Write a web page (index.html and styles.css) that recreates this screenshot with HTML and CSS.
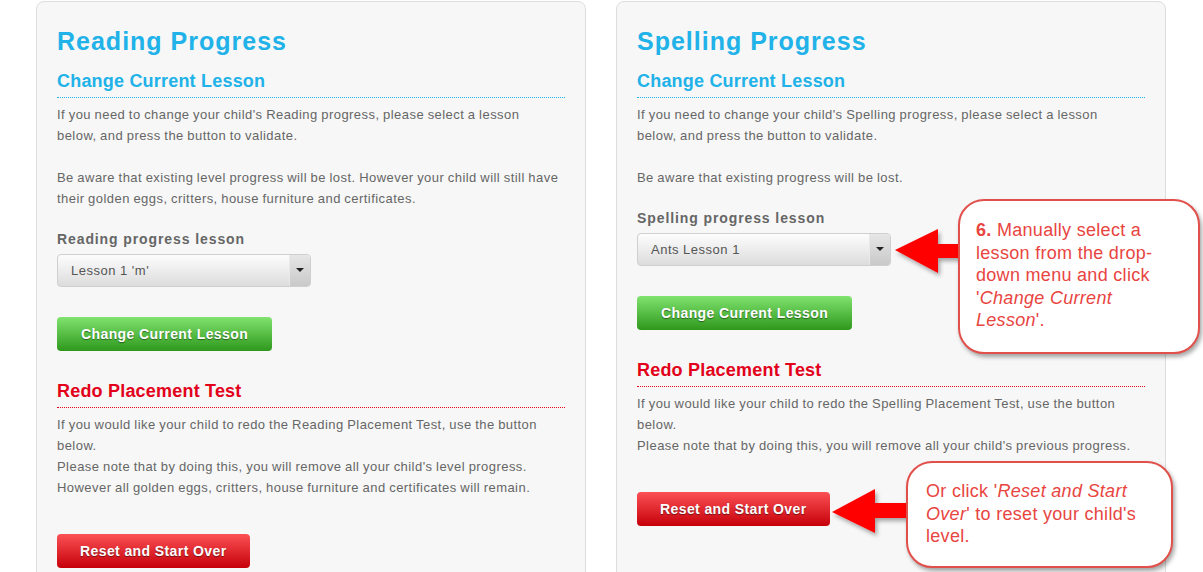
FILE: index.html
```html
<!DOCTYPE html>
<html lang="en">
<head>
  <meta charset="UTF-8">
  <meta name="viewport" content="width=device-width, initial-scale=1.0">
  <title>Progress Settings</title>
  <link rel="stylesheet" href="styles.css">
</head>
<body>
  <div class="page">
    <!-- Reading panel -->
    <section class="panel">
      <h1 class="title">Reading Progress</h1>
      <h2 class="section-title">Change Current Lesson</h2>
      <p>If you need to change your child's Reading progress, please select a lesson<br>below, and press the button to validate.</p>
      <p>Be aware that existing level progress will be lost. However your child will still have<br>their golden eggs, critters, house furniture and certificates.</p>
      <label class="field-label">Reading progress lesson</label>
      <div class="select"><span>Lesson 1 'm'</span><span class="select-arrow"></span></div>
      <button class="btn btn-green">Change Current Lesson</button>

      <h2 class="section-title red">Redo Placement Test</h2>
      <p class="redo-text">If you would like your child to redo the Reading Placement Test, use the button<br>below.<br>
        Please note that by doing this, you will remove all your child's level progress.<br>
        However all golden eggs, critters, house furniture and certificates will remain.</p>
      <button class="btn btn-red">Reset and Start Over</button>
    </section>

    <!-- Spelling panel -->
    <section class="panel">
      <h1 class="title">Spelling Progress</h1>
      <h2 class="section-title">Change Current Lesson</h2>
      <p>If you need to change your child's Spelling progress, please select a lesson<br>below, and press the button to validate.</p>
      <p>Be aware that existing progress will be lost.</p>
      <label class="field-label">Spelling progress lesson</label>
      <div class="select"><span>Ants Lesson 1</span><span class="select-arrow"></span></div>
      <button class="btn btn-green">Change Current Lesson</button>

      <h2 class="section-title red">Redo Placement Test</h2>
      <p class="redo-text">If you would like your child to redo the Spelling Placement Test, use the button<br>below.<br>
        Please note that by doing this, you will remove all your child's previous progress.</p>
      <button class="btn btn-red">Reset and Start Over</button>
    </section>
  </div>

  <!-- Annotation arrows -->
  <svg class="arrows" width="1203" height="572" viewBox="0 0 1203 572">
    <defs>
      <filter id="shadow" x="-20%" y="-20%" width="140%" height="160%">
        <feDropShadow dx="2" dy="3" stdDeviation="2" flood-color="#000" flood-opacity="0.35"/>
      </filter>
    </defs>
    <polygon filter="url(#shadow)" fill="#ff0000" points="895,250 938,229 938,244 962,244 962,258 938,258 938,273"/>
    <polygon filter="url(#shadow)" fill="#ff0000" points="832,512 875,489 875,503 910,503 910,518 875,518 875,533"/>
  </svg>

  <!-- Annotation callouts -->
  <div class="callout callout-lesson">
    <b>6.</b> Manually select a<br>lesson from the drop-<br>down menu and click<br>'<i>Change Current<br>Lesson</i>'.
  </div>
  <div class="callout callout-reset">
    Or click '<i>Reset and Start<br>Over</i>' to reset your child's<br>level.
  </div>
</body>
</html>
```

FILE: styles.css
```css
body {
  margin: 0;
  background: #fff;
  font-family: "Liberation Sans", Arial, sans-serif;
  overflow: hidden;
}
.page {
  display: flex;
  gap: 30px;
  padding: 1px 0 0 36px;
}
.panel {
  box-sizing: border-box;
  width: 550px;
  min-height: 620px;
  padding: 24px 20px 0;
  background: #f7f7f7;
  border: 1px solid #ddd;
  border-radius: 8px;
}
.title {
  margin: 0;
  font-size: 25px;
  line-height: 30px;
  letter-spacing: 1px;
  color: #20b2e8;
}
.section-title {
  margin: 13px 0 0;
  padding-bottom: 4px;
  font-size: 18px;
  line-height: 24px;
  letter-spacing: 0.2px;
  color: #20b2e8;
  border-bottom: 1px dotted #20b2e8;
}
.section-title.red {
  margin-top: 28px;
  color: #e2001a;
  border-bottom-color: #e2001a;
}
p {
  margin: 6px 0 21px;
  font-size: 13px;
  line-height: 21px;
  letter-spacing: 0.45px;
  word-spacing: -0.5px;
  white-space: nowrap;
  color: #666;
}
.redo-text {
  margin-bottom: 0;
}
.field-label {
  display: block;
  margin-top: -1px;
  font-size: 14px;
  font-weight: bold;
  line-height: 21px;
  letter-spacing: 0.9px;
  color: #666;
}
.select {
  box-sizing: border-box;
  display: flex;
  align-items: center;
  width: 254px;
  height: 33px;
  margin-top: 4px;
  padding-left: 13px;
  font-size: 13px;
  letter-spacing: 0.5px;
  color: #555;
  background: linear-gradient(#fdfdfd, #dcdcdc);
  border: 1px solid #cfcfcf;
  border-radius: 4px;
  overflow: hidden;
}
.select span:first-child {
  flex: 1;
}
.select-arrow {
  position: relative;
  width: 20px;
  height: 100%;
  background: linear-gradient(#e6e6e6, #c9c9c9);
  border-left: 1px solid #e9e9e9;
}
.select-arrow::after {
  content: "";
  position: absolute;
  left: 6px;
  top: 13px;
  border-left: 4px solid transparent;
  border-right: 4px solid transparent;
  border-top: 4px solid #222;
}
.btn {
  display: block;
  height: 34px;
  margin-top: 30px;
  padding: 0 24px;
  font-family: "Liberation Sans", Arial, sans-serif;
  font-size: 14px;
  font-weight: bold;
  letter-spacing: 0.4px;
  color: #fff;
  text-shadow: 0 1px 1px rgba(0, 0, 0, 0.45);
  border: none;
  border-radius: 4px;
}
.btn-green {
  background: linear-gradient(#80e36f, #2e981c);
}
.btn-red {
  margin-top: 36px;
  padding: 0 23px;
  background: linear-gradient(#fb5155, #c6000a);
}
.arrows {
  position: absolute;
  top: 0;
  left: 0;
}
.callout {
  position: absolute;
  box-sizing: border-box;
  font-size: 18px;
  line-height: 22.5px;
  letter-spacing: 0.3px;
  color: #e8453f;
  background: #fff;
  border: 2.5px solid #e2504b;
  border-radius: 26px;
  box-shadow: 2px 3px 4px rgba(0, 0, 0, 0.35);
}
.callout-lesson {
  left: 958px;
  top: 199px;
  width: 242px;
  height: 155px;
  padding: 18px 0 0 16px;
}
.callout-reset {
  left: 906px;
  top: 461px;
  width: 267px;
  height: 107px;
  padding: 17px 0 0 18px;
}
```
